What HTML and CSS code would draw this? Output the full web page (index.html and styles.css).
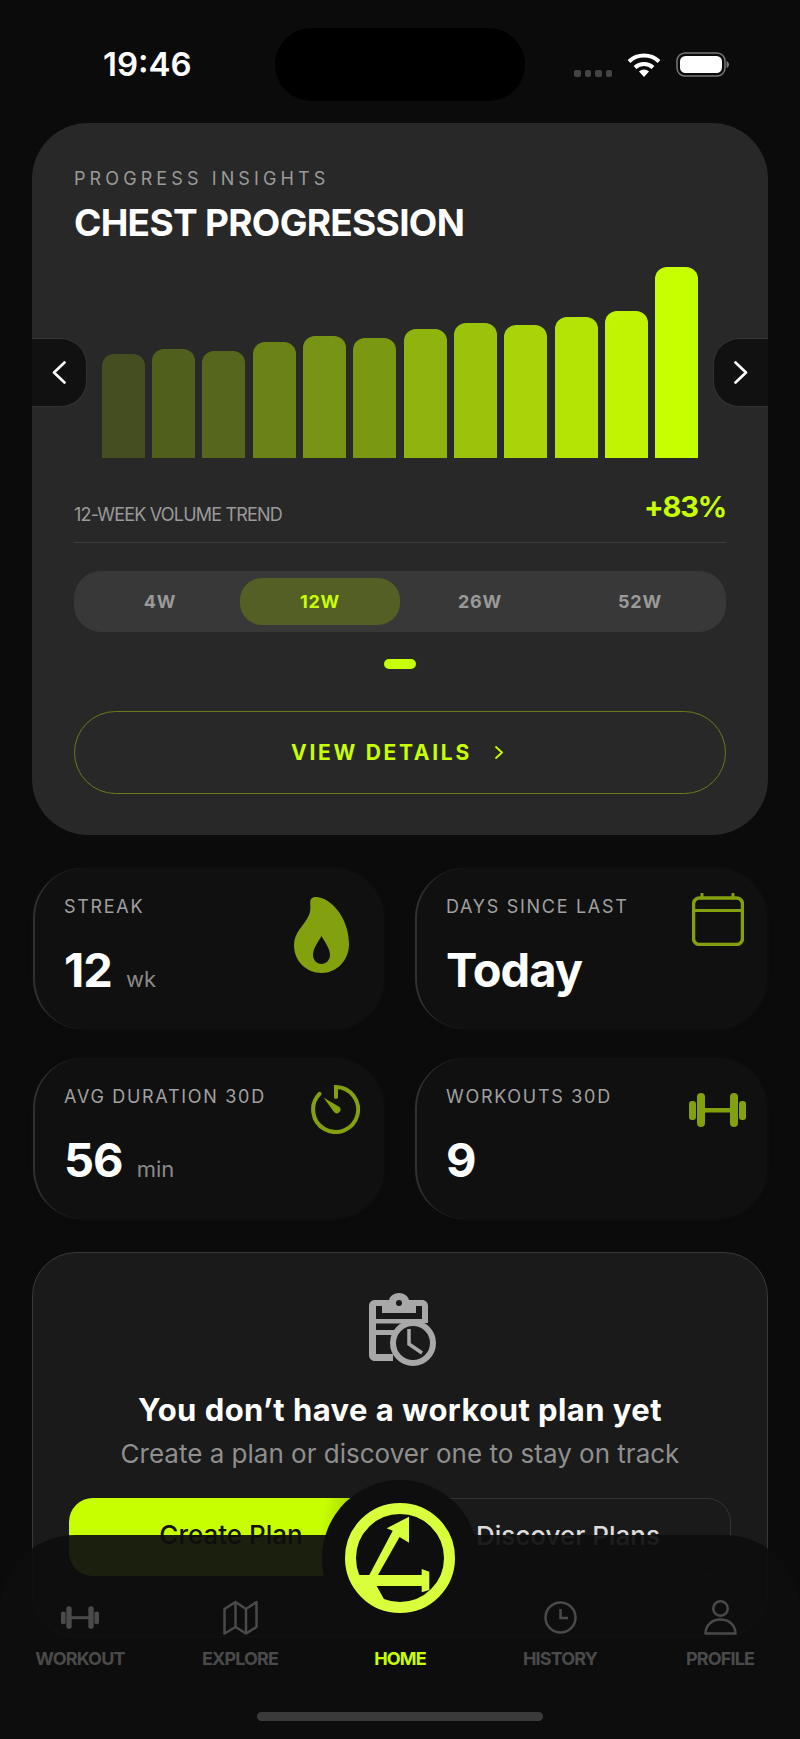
FILE: index.html
```html
<!DOCTYPE html>
<html>
<head>
	<title>Home</title>
	<link rel="stylesheet" href="styles.css">
</head>
<body>
	<div class="screen">
		<header class="status">
			<span class="time">19:46</span>
			<span class="island"></span>
			<span class="signal"><i></i><i></i><i></i><i></i></span>
			<svg class="wifi" width="34" height="24" viewBox="0 0 34 24">
				<path d="M2 8.5A22 22 0 0 1 32 8.5" fill="none" stroke="#fff" stroke-width="4"/>
				<path d="M8 14.5A13 13 0 0 1 26 14.5" fill="none" stroke="#fff" stroke-width="4"/>
				<path d="M12 18.5A7.5 7.5 0 0 1 22 18.5L17 24Z" fill="#fff"/>
			</svg>
			<svg class="battery" width="53" height="25" viewBox="0 0 53 25">
				<rect x="1" y="1" width="48" height="23" rx="8" fill="none" stroke="#777" stroke-width="1.5"/>
				<rect x="4" y="4" width="42" height="17" rx="5.5" fill="#fff"/>
				<path d="M50.5 9C52 9.5 53 11 53 12.5S52 15.5 50.5 16Z" fill="#777"/>
			</svg>
		</header>

		<section class="hero">
			<div class="eyebrow">PROGRESS INSIGHTS</div>
			<h1 class="hero-title">CHEST PROGRESSION</h1>

			<div class="chart">
				<div class="bar" style="height:104px;opacity:.18"></div>
				<div class="bar" style="height:109px;opacity:.26"></div>
				<div class="bar" style="height:107px;opacity:.29"></div>
				<div class="bar" style="height:116px;opacity:.42"></div>
				<div class="bar" style="height:122px;opacity:.5"></div>
				<div class="bar" style="height:120px;opacity:.52"></div>
				<div class="bar" style="height:129px;opacity:.65"></div>
				<div class="bar" style="height:135px;opacity:.72"></div>
				<div class="bar" style="height:133px;opacity:.8"></div>
				<div class="bar" style="height:141px;opacity:.875"></div>
				<div class="bar" style="height:147px;opacity:.95"></div>
				<div class="bar" style="height:191px;opacity:1"></div>
			</div>

			<button class="pager pager-left">
				<svg width="14" height="23" viewBox="0 0 14 23"><path d="M12.5 1.5L2 11.5L12.5 21.5" fill="none" stroke="#fff" stroke-width="2.6" stroke-linecap="round" stroke-linejoin="round"/></svg>
			</button>
			<button class="pager pager-right">
				<svg width="14" height="23" viewBox="0 0 14 23"><path d="M1.5 1.5L12 11.5L1.5 21.5" fill="none" stroke="#fff" stroke-width="2.6" stroke-linecap="round" stroke-linejoin="round"/></svg>
			</button>

			<div class="trend">
				<span class="trend-label">12-WEEK VOLUME TREND</span>
				<span class="trend-value">+83%</span>
			</div>

			<div class="ranges">
				<span class="range">4W</span>
				<span class="range range-active">12W</span>
				<span class="range">26W</span>
				<span class="range">52W</span>
			</div>

			<div class="page-dot"></div>

			<a class="details">
				VIEW DETAILS
				<svg width="10" height="13" viewBox="0 0 10 13"><path d="M2 1l6 5.5L2 12" fill="none" stroke="#c8ff00" stroke-width="1.8" stroke-linecap="round" stroke-linejoin="round"/></svg>
			</a>
		</section>

		<section class="stats">
			<div class="stat">
				<div>
					<div class="stat-label">STREAK</div>
					<div class="stat-value">12 <small>wk</small></div>
				</div>
				<svg class="icon-flame" width="55" height="77" viewBox="0 0 55 77">
					<path fill-rule="evenodd" fill="#83a00f" d="M17 3C19 0 24 .5 29 2.5C44 9 55 28 55 48C55 65 42 77 28 77C12 77 0 65 0 49C0 36 10 30 15 19C18 12 15 7 17 3ZM27.5 40C30 45 36 52 36 59C36 64 32 68 27.5 68C23 68 19 64 19 59C19 52 25 45 27.5 40Z"/>
				</svg>
			</div>
			<div class="stat">
				<div>
					<div class="stat-label">DAYS SINCE LAST</div>
					<div class="stat-value">Today</div>
				</div>
				<svg class="icon-calendar" width="52" height="53" viewBox="0 0 52 53">
					<path d="M10 1V5M41 1V5" stroke="#83a00f" stroke-width="3" stroke-linecap="round"/>
					<rect x="1.5" y="5" width="49" height="46.5" rx="6" fill="none" stroke="#83a00f" stroke-width="3.5"/>
					<path d="M1.5 17.5H50.5" stroke="#83a00f" stroke-width="3"/>
				</svg>
			</div>
			<div class="stat">
				<div>
					<div class="stat-label">AVG DURATION 30D</div>
					<div class="stat-value">56 <small>min</small></div>
				</div>
				<svg class="icon-timer" width="49" height="49" viewBox="0 0 49 49">
					<path d="M25 12V2A22.5 22.5 0 1 1 8.5 8.8" fill="none" stroke="#83a00f" stroke-width="4" stroke-linecap="round"/>
					<path d="M12.5 12.500L28.500 22A3.500 3.500 0 0 1 23 27Z" fill="#83a00f"/>
				</svg>
			</div>
			<div class="stat">
				<div>
					<div class="stat-label">WORKOUTS 30D</div>
					<div class="stat-value">9</div>
				</div>
				<svg class="icon-dumbbell" width="57" height="34" viewBox="0 0 57 34" fill="#83a00f">
					<rect x="0" y="8" width="7" height="19" rx="3"/>
					<rect x="8" y="0" width="8" height="34" rx="4"/>
					<rect x="15" y="15" width="27" height="4.500"/>
					<rect x="41" y="0" width="8" height="34" rx="4"/>
					<rect x="50" y="8" width="7" height="19" rx="3"/>
				</svg>
			</div>
		</section>

		<section class="plan">
			<svg class="plan-icon" width="67" height="73" viewBox="0 0 67 73">
				<path fill="#a8a8a8" d="M20 7C21 3 25 0 30 0S39 3 40 7H53C56.500 7 59 9.500 59 13V30H53V13H47V20H13V13H7V61H24V68H6C2.500 68 0 65.500 0 62V13C0 9.500 2.500 7 6 7Z"/>
				<circle cx="30" cy="10" r="3" fill="#1a1a1a"/>
				<rect x="7" y="26" width="46" height="4.500" fill="#a8a8a8"/>
				<rect x="7" y="37" width="18" height="5" fill="#a8a8a8"/>
				<circle cx="44" cy="50" r="20" fill="#1a1a1a" stroke="#a8a8a8" stroke-width="6"/>
				<path d="M40 36V51L53 60" fill="none" stroke="#a8a8a8" stroke-width="3.500"/>
			</svg>
			<h2 class="plan-title">You don’t have a workout plan yet</h2>
			<p class="plan-text">Create a plan or discover one to stay on track</p>
			<div class="plan-actions">
				<a class="plan-btn plan-btn-primary">Create Plan</a>
				<a class="plan-btn plan-btn-ghost">Discover Plans</a>
			</div>
		</section>

		<nav class="tabbar">
			<div class="tabs">
				<a class="tab">
					<svg width="38" height="35" viewBox="0 -6 57 46" fill="#4a4a4a">
						<rect x="0" y="8" width="7" height="19" rx="3"/>
						<rect x="8" y="0" width="8" height="34" rx="4"/>
						<rect x="15" y="15" width="27" height="4.500"/>
						<rect x="41" y="0" width="8" height="34" rx="4"/>
						<rect x="50" y="8" width="7" height="19" rx="3"/>
					</svg>
					<span>WORKOUT</span>
				</a>
				<a class="tab">
					<svg width="35" height="35" viewBox="0 0 35 35" fill="none" stroke="#4a4a4a" stroke-width="2.500" stroke-linejoin="round">
						<path d="M1.500 9L12.500 2L23 9L33.500 2V27L23 33.500L12.500 27L1.500 33.500Z"/>
						<path d="M12.500 2V27M23 9V33.500"/>
					</svg>
					<span>EXPLORE</span>
				</a>
				<a class="tab tab-active">
					<span class="tab-space"></span>
					<span>HOME</span>
				</a>
				<a class="tab">
					<svg width="33" height="35" viewBox="0 0 33 35" fill="none" stroke="#4a4a4a" stroke-width="2.500">
						<circle cx="16.500" cy="17.500" r="15"/>
						<path d="M16.500 9V18H24"/>
					</svg>
					<span>HISTORY</span>
				</a>
				<a class="tab">
					<svg width="33" height="35" viewBox="0 0 33 35" fill="none" stroke="#4a4a4a" stroke-width="2.500" stroke-linejoin="round">
						<circle cx="16.500" cy="8.500" r="7.250"/>
						<path d="M1.500 33.500C1.500 25 8 19.500 16.500 19.500S31.500 25 31.500 33.500Z"/>
					</svg>
					<span>PROFILE</span>
				</a>
			</div>
			<div class="handle"></div>

			<div class="home-disk">
				<svg width="110" height="110" viewBox="0 0 110 110">
					<circle cx="55" cy="55" r="49.500" fill="none" stroke="#d9ff3c" stroke-width="11"/>
					<path fill="#d9ff3c" d="M64 13.700L41.700 25.300L47.700 27.700L24.300 72H15L10 70L18 92L40 98L31.700 83H76.700V89.300L84.300 87V68.700L76.700 66V72H33L54.500 34L64 39.700Z"/>
				</svg>
			</div>
		</nav>
	</div>
</body>
</html>
```

FILE: styles.css
```css
* { box-sizing: border-box; }
html, body {
	margin: 0;
	background: #0b0b0b;
}
body {
	font-family: "Inter", "Liberation Sans", sans-serif;
	color: #fff;
}
.screen {
	position: relative;
	width: 800px;
	height: 1739px;
	overflow: hidden;
}

/* status bar */
.status {
	display: flex;
	align-items: flex-start;
	height: 123px;
	padding: 28px 0 0 103px;
}
.time {
	width: 88px;
	margin: 16px 84px 0 0;
	font-size: 33px;
	line-height: 40px;
	font-weight: 600;
	white-space: nowrap;
}
.island {
	width: 250px;
	height: 73px;
	margin-right: 49px;
	border-radius: 37px;
	background: #000;
}
.signal {
	display: flex;
	gap: 4px;
	margin: 42px 15px 0 0;
}
.signal i {
	width: 6.5px;
	height: 7px;
	border-radius: 2px;
	background: #444;
}
.wifi { margin: 25px 15px 0 0; }
.battery { margin-top: 24px; }

/* progress card */
.hero {
	position: relative;
	margin: 0 32px;
	padding: 45px 42px 41px;
	border-radius: 56px;
	background: #282828;
}
.eyebrow {
	font-size: 18px;
	line-height: 22px;
	letter-spacing: 4.1px;
	color: #9a9a9a;
	white-space: nowrap;
}
.hero-title {
	margin: 11px 0 0;
	font-size: 37px;
	line-height: 44px;
	font-weight: 700;
	letter-spacing: -.7px;
	white-space: nowrap;
}
.chart {
	display: flex;
	align-items: flex-end;
	justify-content: space-between;
	height: 191px;
	margin-top: 22px;
	padding: 0 27.5px;
}
.bar {
	width: 43px;
	border-radius: 12px 12px 0 0;
	background: #c8ff00;
}
.pager {
	position: absolute;
	top: 215px;
	display: flex;
	align-items: center;
	justify-content: center;
	width: 55px;
	height: 69px;
	padding: 0;
	border: 1px solid #333;
	background: #111;
}
.pager-left {
	left: 0;
	border-left: 0;
	border-radius: 0 26px 26px 0;
}
.pager-right {
	right: 0;
	border-right: 0;
	border-radius: 26px 0 0 26px;
}
.trend {
	display: flex;
	align-items: flex-start;
	justify-content: space-between;
	margin-top: 32px;
	padding-bottom: 16px;
	border-bottom: 1.5px solid #3c3c3c;
}
.trend-label {
	margin-top: 14px;
	font-size: 18px;
	line-height: 22px;
	letter-spacing: -.8px;
	color: #9a9a9a;
}
.trend-value {
	font-size: 29px;
	line-height: 34px;
	font-weight: 700;
	letter-spacing: -1.2px;
	color: #c8ff00;
}
.ranges {
	display: flex;
	margin-top: 28px;
	padding: 7px 6px;
	border-radius: 27px;
	background: #383838;
}
.range {
	flex: 1;
	height: 47px;
	border-radius: 22px;
	font-size: 18px;
	line-height: 47px;
	font-weight: 700;
	letter-spacing: .8px;
	text-align: center;
	color: #9a9a9a;
}
.range-active {
	background: #535f25;
	color: #c8ff00;
}
.page-dot {
	width: 32px;
	height: 10px;
	margin: 27px auto 0;
	border-radius: 5px;
	background: #c8ff00;
}
.details {
	display: flex;
	align-items: center;
	justify-content: center;
	gap: 22px;
	height: 83px;
	margin-top: 42px;
	padding-right: 5px;
	border: 1.5px solid #6b7a1a;
	border-radius: 42px;
	font-size: 21px;
	font-weight: 700;
	letter-spacing: 2.7px;
	color: #c8ff00;
}

/* stat cards */
.stats {
	display: grid;
	grid-template-columns: 351px 352px;
	grid-auto-rows: 161px;
	gap: 29px 31px;
	margin: 33px 33px 0 33px;
}
.stat {
	display: flex;
	justify-content: space-between;
	align-items: flex-start;
	padding: 28px 0 0 29px;
	border-left: 2px solid #303030;
	border-radius: 50px;
	background: #101010;
	box-shadow: 0 0 4px #101010;
}
.stat-label {
	font-size: 18px;
	line-height: 22px;
	letter-spacing: 1.7px;
	color: #a0a0a0;
	white-space: nowrap;
}
.stat-value {
	margin-top: 24px;
	font-size: 47px;
	line-height: 56px;
	font-weight: 700;
	letter-spacing: -1px;
}
.stat-value small {
	margin-left: 4px;
	font-size: 22px;
	font-weight: 400;
	letter-spacing: 0;
	color: #8a8a8a;
}
.icon-flame { margin: 0 35px 0 0; }
.icon-calendar { margin: -3px 23px 0 0; }
.icon-timer { margin: -1px 24px 0 0; }
.icon-dumbbell { margin: 7px 21px 0 0; }

/* empty plan card */
.plan {
	margin: 33px 32px 0;
	padding: 40px 36px 60px;
	border: 1.5px solid #383838;
	border-radius: 44px;
	background: #1a1a1a;
	text-align: center;
}
.plan-icon {
	display: block;
	margin: 0 0 0 300px;
}
.plan-title {
	margin: 25px 0 0;
	font-size: 31px;
	line-height: 38px;
	font-weight: 700;
	letter-spacing: .45px;
	white-space: nowrap;
}
.plan-text {
	margin: 8px 0 0;
	font-size: 26px;
	line-height: 34px;
	color: #8f8f8f;
	white-space: nowrap;
}
.plan-actions {
	display: flex;
	gap: 12px;
	margin-top: 27px;
}
.plan-btn {
	flex: 1;
	height: 78px;
	border-radius: 24px;
	font-size: 26px;
	line-height: 74px;
	font-weight: 500;
}
.plan-btn-primary {
	background: linear-gradient(100deg, #c8ff00 76%, #6f8800 100%);
	color: #111;
}
.plan-btn-ghost {
	border: 1.5px solid #333;
	color: #ddd;
}

/* bottom navigation */
.tabbar {
	position: absolute;
	left: 0;
	right: 0;
	bottom: 0;
	height: 204px;
	padding-top: 65px;
	border-radius: 75px 75px 0 0;
	background: rgba(14, 14, 14, .93);
}
.tabs {
	display: grid;
	grid-template-columns: repeat(5, 160px);
}
.tab {
	display: flex;
	flex-direction: column;
	align-items: center;
	gap: 13px;
	font-size: 18px;
	line-height: 22px;
	font-weight: 700;
	letter-spacing: -.85px;
	color: #4a4a4a;
}
.tab svg { display: block; }
.tab-space { height: 35px; }
.tab-active { color: #c8ff00; }
.handle {
	width: 286px;
	height: 9px;
	margin: 42px auto 0;
	border-radius: 5px;
	background: #3a3a3a;
}
.home-disk {
	position: absolute;
	top: -55px;
	left: 322px;
	display: flex;
	align-items: center;
	justify-content: center;
	width: 156px;
	height: 156px;
	border-radius: 50%;
	background: #0e0e0e;
}
```
